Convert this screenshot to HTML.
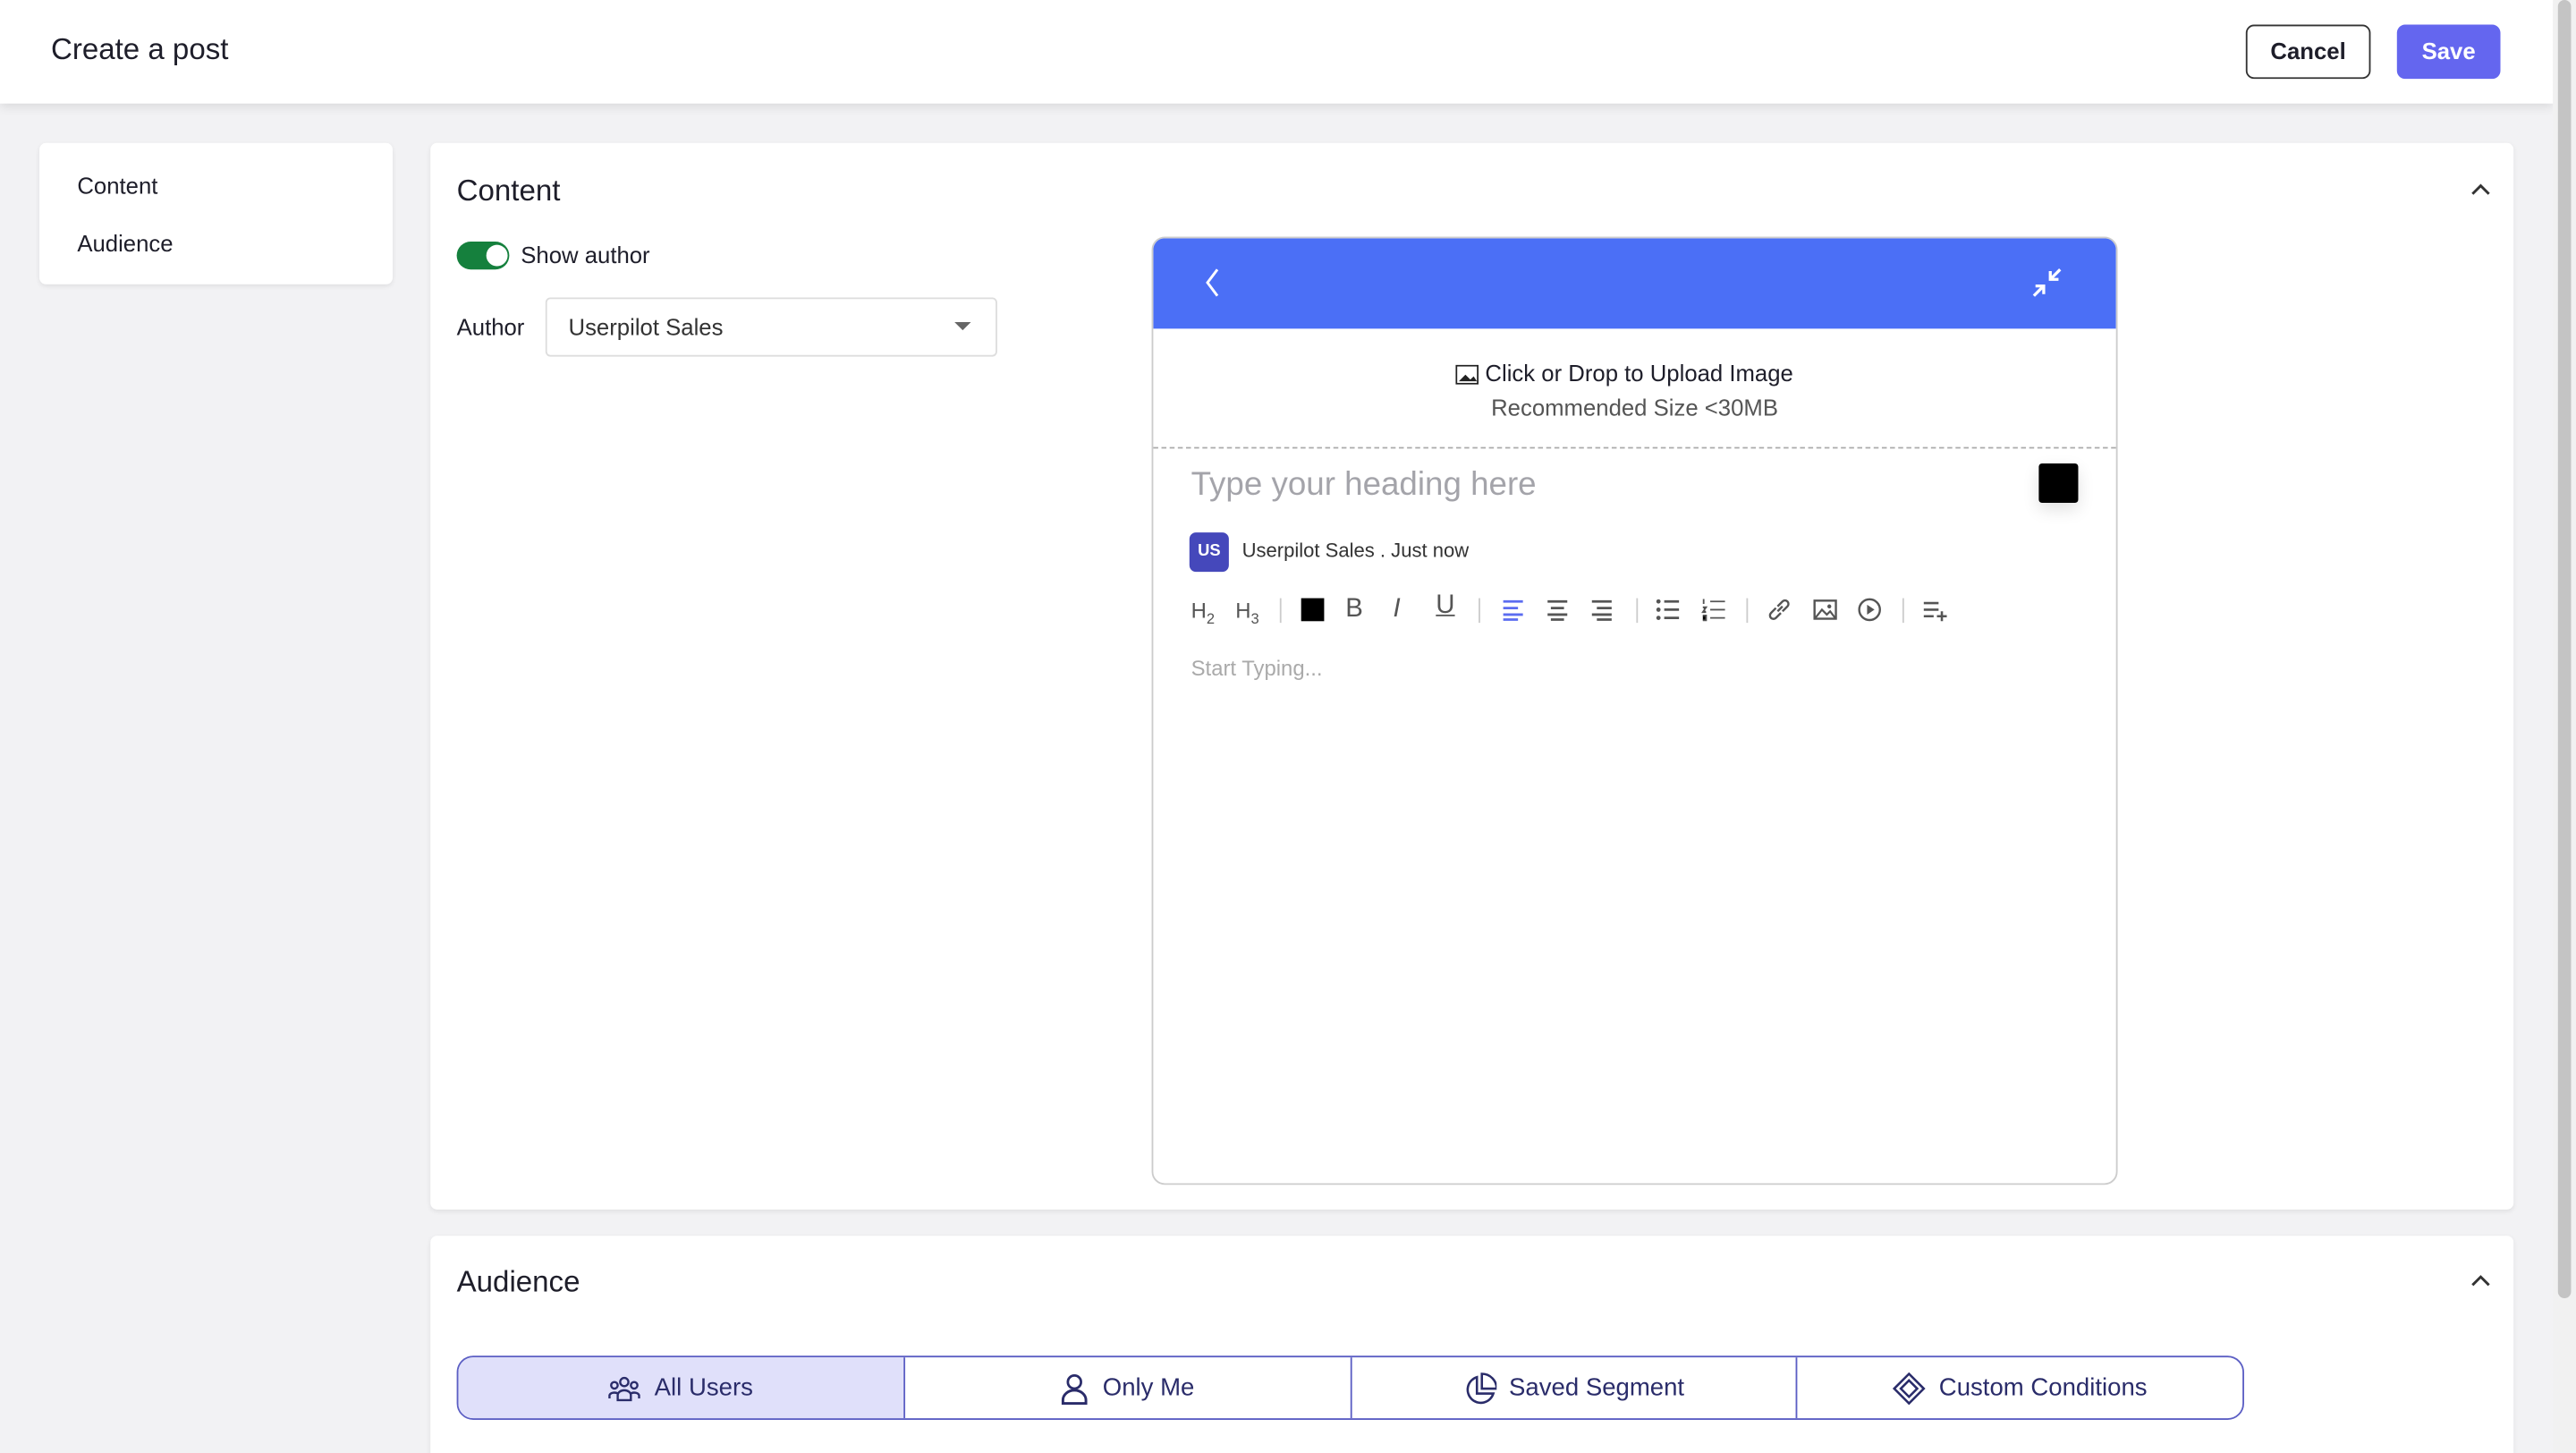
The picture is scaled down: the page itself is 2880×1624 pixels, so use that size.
<!DOCTYPE html>
<html><head><meta charset="utf-8"><style>
*{box-sizing:border-box;margin:0;padding:0}
html,body{width:2880px;height:1624px;overflow:hidden;background:#f2f2f4}
#w{width:1568px;height:884px;transform:scale(1.836735);transform-origin:0 0;position:relative;font-family:"Liberation Sans",sans-serif;color:#1e1e2a}
.a{position:absolute}
.card{position:absolute;background:#fff;border-radius:4px;box-shadow:0 1px 3px rgba(0,0,0,.08)}
.tb svg{position:absolute;top:363px;width:16px;height:16px}
</style></head><body><div id="w">
<div class="a" style="left:0;top:0;width:1554px;height:63px;background:#fff;box-shadow:0 2px 6px rgba(0,0,0,.1)"></div>
<div class="a" style="left:31px;top:20px;font-size:18px">Create a post</div>
<div class="a" style="left:1367px;top:15px;width:76px;height:33px;border:1px solid #333;border-radius:5px;background:#fff;font-size:14px;font-weight:bold;text-align:center;line-height:31px">Cancel</div>
<div class="a" style="left:1459px;top:15px;width:63px;height:33px;border-radius:5px;background:#6466ef;color:#fff;font-size:14px;font-weight:bold;text-align:center;line-height:33px">Save</div>
<div class="a" style="left:1554px;top:0;width:14px;height:884px;background:#f1f1f1"></div>
<div class="a" style="left:1557px;top:0;width:8px;height:790px;background:#c4c4c4;border-radius:4px"></div>

<div class="card" style="left:24px;top:87px;width:215px;height:86px"></div>
<div class="a" style="left:47px;top:105px;font-size:14px">Content</div>
<div class="a" style="left:47px;top:140px;font-size:14px">Audience</div>

<div class="card" style="left:262px;top:87px;width:1268px;height:649px"></div>
<div class="a" style="left:278px;top:106px;font-size:18px">Content</div>
<svg class="a" style="left:1503px;top:109px" width="14" height="14"><path d="M2 9l5-5 5 5" stroke="#333" stroke-width="1.6" fill="none"/></svg>
<div class="a" style="left:278px;top:147px;width:32px;height:17px;border-radius:9px;background:#15803d"></div>
<div class="a" style="left:296px;top:149px;width:13px;height:13px;border-radius:50%;background:#fff"></div>
<div class="a" style="left:317px;top:147px;font-size:14px">Show author</div>
<div class="a" style="left:278px;top:191px;font-size:14px">Author</div>
<div class="a" style="left:332px;top:181px;width:275px;height:36px;border:1px solid #ddd;border-radius:3px;font-size:14px;line-height:34px;padding-left:13px;color:#333">Userpilot Sales</div>
<div class="a" style="left:581px;top:196px;border:5px solid transparent;border-top:5px solid #666"></div>

<div class="a" style="left:701px;top:144px;width:588px;height:577px;border:1px solid #ccc;border-radius:8px;background:#fff;overflow:hidden">
 <div style="height:55px;background:#4b6ff6"></div>
</div>
<svg class="a" style="left:730px;top:162px" width="16" height="20"><path d="M11 2L5 10l6 8" stroke="#fff" stroke-width="1.6" fill="none"/></svg>
<svg class="a" style="left:1236px;top:162px" width="20" height="20"><path d="M12 8l6-6M12 3v5h5M8 12l-6 6M3 12h5v5" stroke="#fff" stroke-width="1.8" fill="none"/></svg>
<svg class="a" style="left:886px;top:222px" width="14" height="12"><rect x=".5" y=".5" width="13" height="11" fill="none" stroke="#222"/><path d="M2 10l4-4 3 3 2-2 2 3z" fill="#222"/></svg>
<div class="a" style="left:904px;top:219px;font-size:14px">Click or Drop to Upload Image</div>
<div class="a" style="left:701px;top:240px;width:588px;text-align:center;font-size:14px;color:#555">Recommended Size &lt;30MB</div>
<div class="a" style="left:702px;top:272px;width:586px;border-top:1px dashed #aaa"></div>
<div class="a" style="left:725px;top:284px;font-size:20px;color:#a4a4aa">Type your heading here</div>
<div class="a" style="left:1241px;top:282px;width:24px;height:24px;background:#000;border-radius:2px;box-shadow:0 4px 10px rgba(0,0,0,.12)"></div>
<div class="a" style="left:724px;top:324px;width:24px;height:24px;border-radius:4px;background:#4548bb;color:#fff;font-size:10px;font-weight:bold;text-align:center;line-height:24px">US</div>
<div class="a" style="left:756px;top:328px;font-size:12px;color:#333">Userpilot Sales . Just now</div>
<div class="tb">
<div class="a" style="left:725px;top:364px;font-size:13px;color:#555">H<sub style="font-size:9px">2</sub></div>
<div class="a" style="left:752px;top:364px;font-size:13px;color:#555">H<sub style="font-size:9px">3</sub></div>
<div class="a" style="left:779px;top:364px;width:1px;height:15px;background:#ccc"></div>
<div class="a" style="left:792px;top:364px;width:14px;height:14px;background:#000"></div>
<div class="a" style="left:819px;top:362px;font-size:16px;color:#555">B</div>
<div class="a" style="left:848px;top:362px;font-size:16px;color:#555;font-style:italic">I</div>
<div class="a" style="left:874px;top:360px;font-size:16px;color:#555;text-decoration:underline">U</div>
<div class="a" style="left:900px;top:364px;width:1px;height:15px;background:#ccc"></div>
<svg style="left:913px" viewBox="0 0 16 16"><path d="M2 3h12M2 7h9M2 11h12M2 14h9" stroke="#5b6cf0" stroke-width="1.5"/></svg>
<svg style="left:940px" viewBox="0 0 16 16"><path d="M2 3h12M4 7h8M2 11h12M4 14h8" stroke="#555" stroke-width="1.5"/></svg>
<svg style="left:967px" viewBox="0 0 16 16"><path d="M2 3h12M5 7h9M2 11h12M5 14h9" stroke="#555" stroke-width="1.5"/></svg>
<div class="a" style="left:996px;top:364px;width:1px;height:15px;background:#ccc"></div>
<svg style="left:1007px" viewBox="0 0 16 16"><path d="M6 3h9M6 8h9M6 13h9" stroke="#555" stroke-width="1.5"/><circle cx="2.5" cy="3" r="1.3" fill="#555"/><circle cx="2.5" cy="8" r="1.3" fill="#555"/><circle cx="2.5" cy="13" r="1.3" fill="#555"/></svg>
<svg style="left:1035px" viewBox="0 0 16 16"><path d="M6 3h9M6 8h9M6 13h9M2 1.5v3M1.5 6.5h2l-2 3h2M1.5 11.5h2v3h-2" stroke="#555" stroke-width="1"/></svg>
<div class="a" style="left:1063px;top:364px;width:1px;height:15px;background:#ccc"></div>
<svg style="left:1075px" viewBox="0 0 16 16"><path d="M7 9l3-3M6 7l-3 3a2 2 0 003 3l3-3M10 9l3-3a2 2 0 00-3-3L7 6" stroke="#555" stroke-width="1.3" fill="none"/></svg>
<svg style="left:1103px" viewBox="0 0 16 16"><rect x="1.5" y="2.5" width="13" height="11" fill="none" stroke="#555" stroke-width="1.3"/><path d="M2 13l4-5 3 3 2-2 3 4" stroke="#555" stroke-width="1.2" fill="none"/><circle cx="10.5" cy="6" r="1.2" fill="#555"/></svg>
<svg style="left:1130px" viewBox="0 0 16 16"><circle cx="8" cy="8" r="6.3" fill="none" stroke="#555" stroke-width="1.3"/><path d="M6.5 5v6l4.5-3z" fill="#555"/></svg>
<div class="a" style="left:1158px;top:364px;width:1px;height:15px;background:#ccc"></div>
<svg style="left:1170px" viewBox="0 0 16 16"><path d="M1 4h9M1 8h9M1 12h6M9 12h6M12 9v6" stroke="#555" stroke-width="1.4"/></svg>
</div>
<div class="a" style="left:725px;top:399px;font-size:13px;color:#aaa">Start Typing...</div>

<div class="card" style="left:262px;top:752px;width:1268px;height:140px"></div>
<div class="a" style="left:278px;top:770px;font-size:18px">Audience</div>
<svg class="a" style="left:1503px;top:773px" width="14" height="14"><path d="M2 9l5-5 5 5" stroke="#333" stroke-width="1.6" fill="none"/></svg>
<div class="a" style="left:278px;top:825px;width:1088px;height:39px;border:1px solid #5c5fc4;border-radius:10px;overflow:hidden;display:flex;font-size:15px;color:#2a2c6a">
 <div style="flex:1;background:#e0e0fa;display:flex;align-items:center;justify-content:center;gap:8px"><svg width="20" height="16"><circle cx="10" cy="4" r="2.5" fill="none" stroke="#2a2c6a" stroke-width="1.3"/><circle cx="4" cy="6" r="2" fill="none" stroke="#2a2c6a" stroke-width="1.3"/><circle cx="16" cy="6" r="2" fill="none" stroke="#2a2c6a" stroke-width="1.3"/><path d="M6 15v-3a4 3 0 018 0v3zM1 14v-2a3 2 0 015-1M19 14v-2a3 2 0 00-5-1" fill="none" stroke="#2a2c6a" stroke-width="1.3"/></svg>All Users</div>
 <div style="flex:1;border-left:1px solid #5c5fc4;display:flex;align-items:center;justify-content:center;gap:8px"><svg width="18" height="20"><circle cx="9" cy="6" r="4" fill="none" stroke="#2a2c6a" stroke-width="1.5"/><path d="M2 19v-2a7 6 0 0114 0v2z" fill="none" stroke="#2a2c6a" stroke-width="1.6"/></svg>Only Me</div>
 <div style="flex:1;border-left:1px solid #5c5fc4;display:flex;align-items:center;justify-content:center;gap:8px"><svg width="20" height="20"><path d="M8 3a8 8 0 1010 10h-10z" fill="none" stroke="#2a2c6a" stroke-width="1.4"/><path d="M11 1v9h9a9 9 0 00-9-9z" fill="none" stroke="#2a2c6a" stroke-width="1.4"/></svg>Saved Segment</div>
 <div style="flex:1;border-left:1px solid #5c5fc4;display:flex;align-items:center;justify-content:center;gap:8px"><svg width="20" height="20"><path d="M10 1l9 9-9 9-9-9z M10 5l5 5-5 5-5-5z" fill="none" stroke="#2a2c6a" stroke-width="1.4"/></svg>Custom Conditions</div>
</div>
</div></body></html>
